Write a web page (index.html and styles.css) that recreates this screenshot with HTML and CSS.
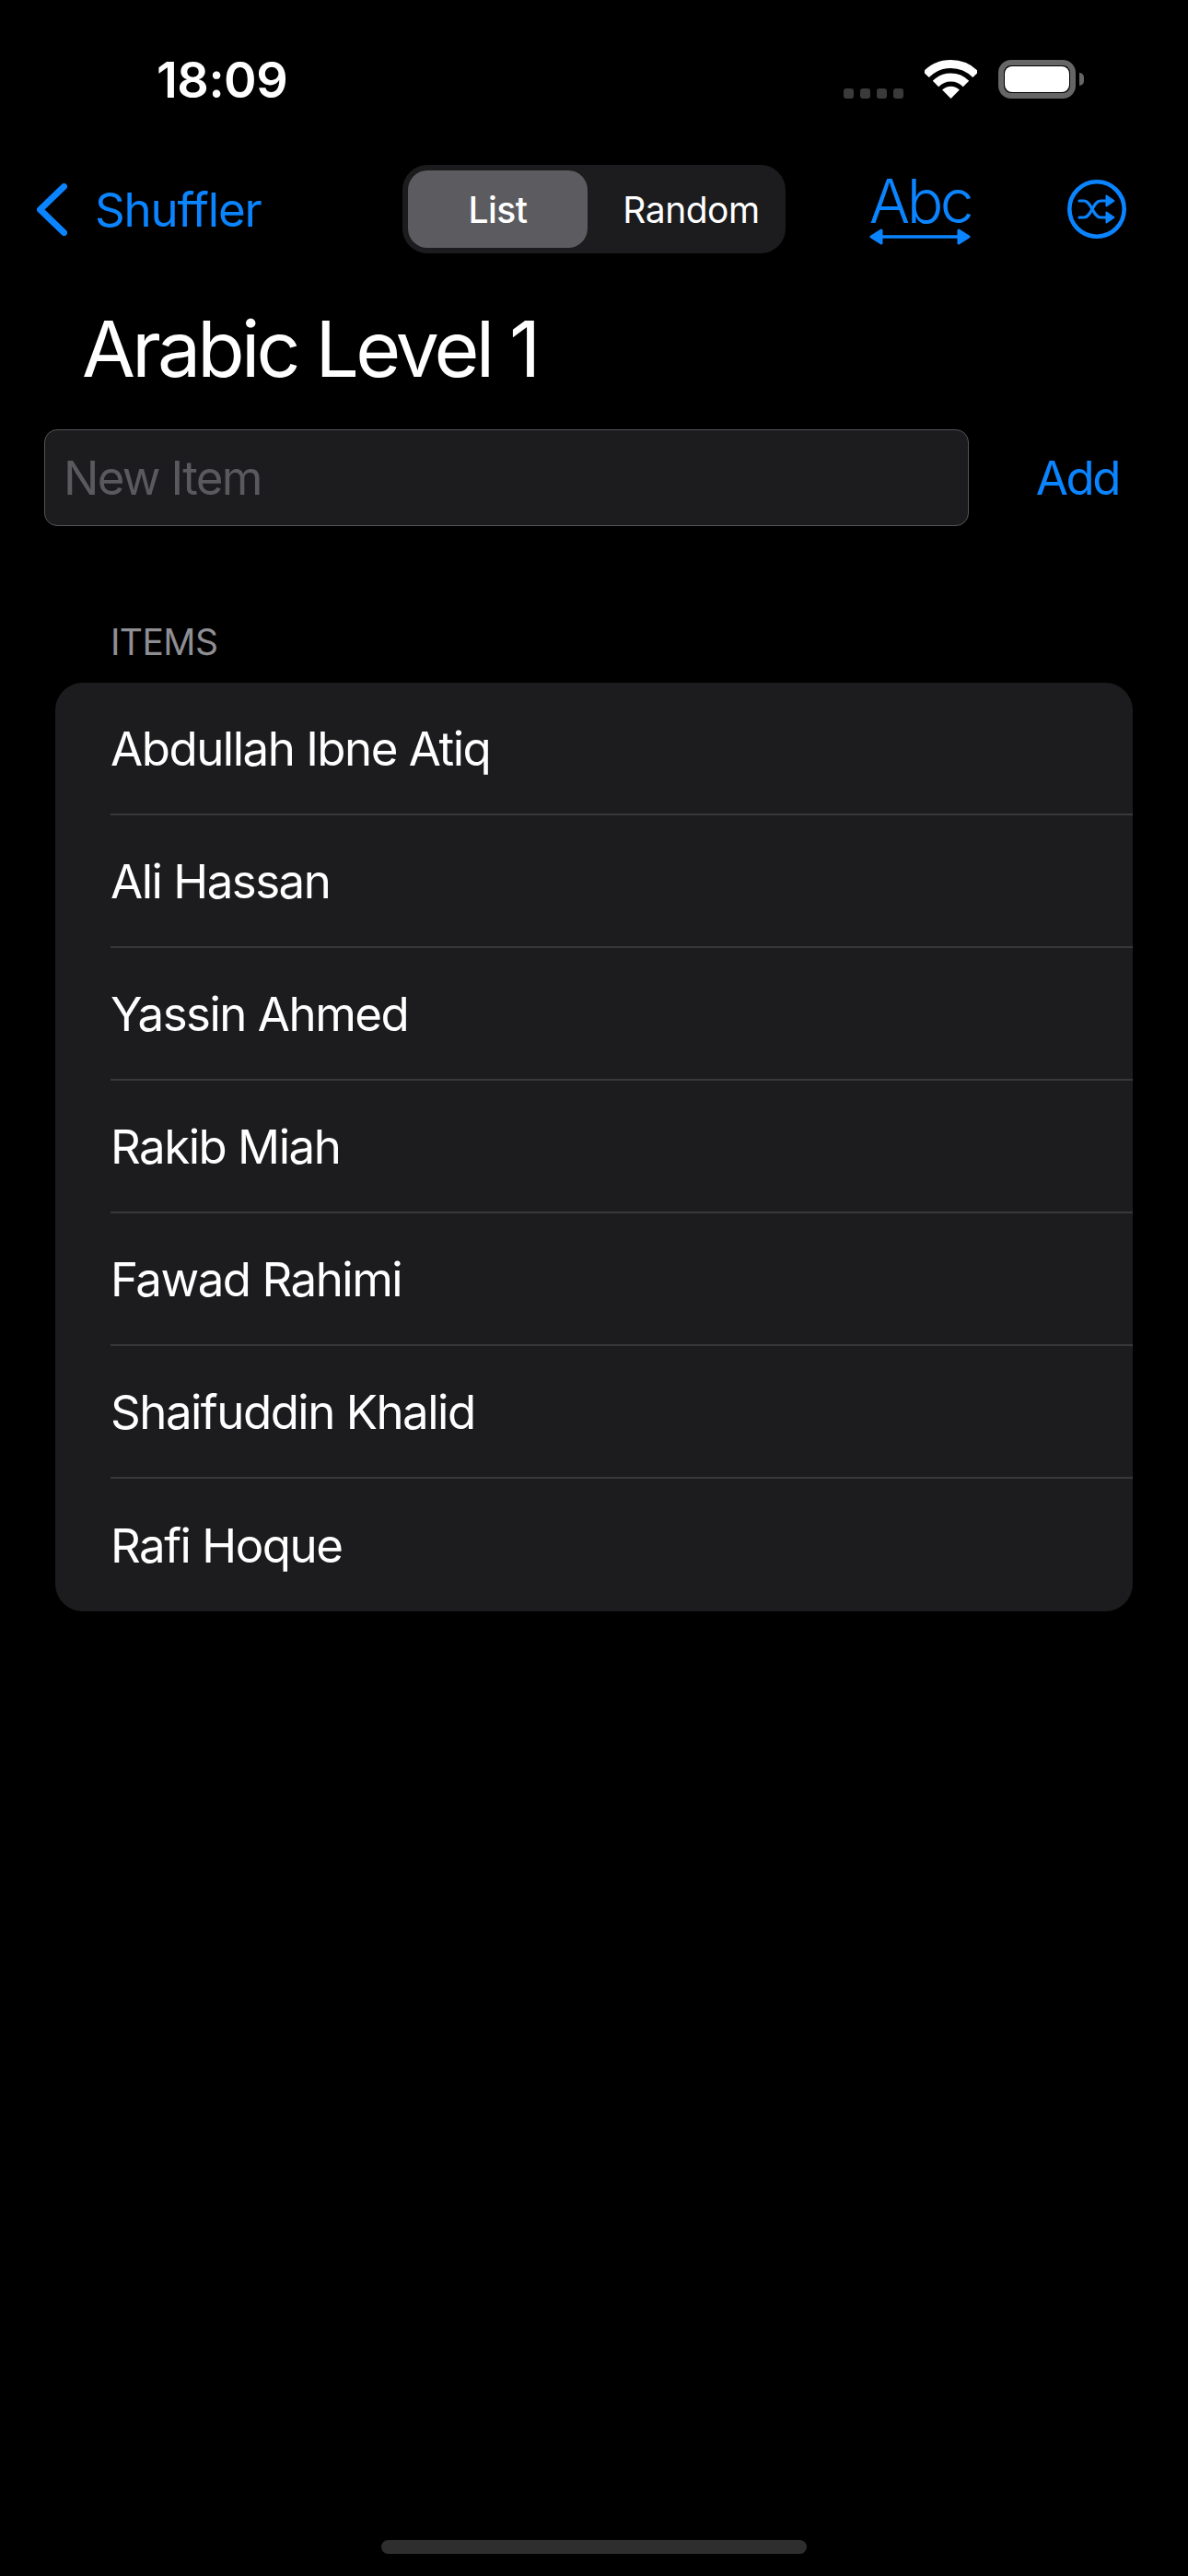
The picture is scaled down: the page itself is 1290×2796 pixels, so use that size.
FILE: index.html
```html
<!DOCTYPE html>
<html lang="en">
<head>
    <meta charset="UTF-8">
    <meta name="viewport" content="width=device-width, initial-scale=1.0">
    <title>Arabic Level 1</title>
    <link rel="stylesheet" href="styles.css">
</head>
<body>
    <div class="screen">
        <header class="status">
            <span class="time">18:09</span>
            <div class="status-icons">
                <div class="signal"><i></i><i></i><i></i><i></i></div>
                <svg class="wifi" width="57" height="42" viewBox="0 0 57 42" fill="none" stroke="#fff" stroke-width="9">
                    <path d="M1.5 16A37.5 37.5 0 0 1 55.5 16"/>
                    <path d="M12 26A23 23 0 0 1 45 26"/>
                    <path d="M28.5 42L19.1 32.6A13.3 13.3 0 0 1 37.9 32.6Z" fill="#fff" stroke="none"/>
                </svg>
                <div class="battery"><div class="battery-level"></div></div>
                <div class="battery-cap"></div>
            </div>
        </header>

        <nav class="nav">
            <a class="back" href="#">
                <svg width="33" height="57" viewBox="0 0 33 57" fill="none" stroke="#0a84ff" stroke-width="7" stroke-linecap="round" stroke-linejoin="round">
                    <path d="M29.5 3.5L3.5 28.5L29.5 53.5"/>
                </svg>
                <span>Shuffler</span>
            </a>
            <div class="segment">
                <button class="seg-item seg-active">List</button>
                <button class="seg-item seg-random">Random</button>
            </div>
            <div class="abc">
                <span class="abc-text">Abc</span>
                <svg width="110" height="18" viewBox="0 0 110 18" fill="#0a84ff" stroke="#0a84ff" stroke-linejoin="round">
                    <path d="M12 9H98" stroke-width="3.5"/>
                    <path d="M13 2L2 9L13 16Z" stroke-width="3"/>
                    <path d="M97 2L108 9L97 16Z" stroke-width="3"/>
                </svg>
            </div>
            <svg class="shuffle" width="64" height="64" viewBox="0 0 64 64" fill="none" stroke="#0a84ff">
                <circle cx="32" cy="32" r="29.7" stroke-width="4.6"/>
                <path d="M13 23H18C26 23 28 41 36 41H43" stroke-width="3.2" stroke-linecap="round"/>
                <path d="M13 41H18C26 41 28 23 36 23H43" stroke-width="3.2" stroke-linecap="round"/>
                <path d="M42.500 17.500L50.500 23L42.500 28.500Z" fill="#0a84ff" stroke-width="2" stroke-linejoin="round"/>
                <path d="M42.500 35.500L50.500 41L42.500 46.500Z" fill="#0a84ff" stroke-width="2" stroke-linejoin="round"/>
            </svg>
        </nav>

        <h1 class="title">Arabic Level 1</h1>

        <div class="add-row">
            <input class="new-item" type="text" placeholder="New Item">
            <a class="add" href="#">Add</a>
        </div>

        <section class="items">
            <h2 class="items-label">ITEMS</h2>
            <ul class="list">
                <li>Abdullah Ibne Atiq</li>
                <li>Ali Hassan</li>
                <li>Yassin Ahmed</li>
                <li>Rakib Miah</li>
                <li>Fawad Rahimi</li>
                <li>Shaifuddin Khalid</li>
                <li>Rafi Hoque</li>
            </ul>
        </section>

        <div class="home-bar"></div>
    </div>
</body>
</html>
```

FILE: styles.css
```css
body {
    margin: 0;
    background: #000;
    color: #fff;
    font-family: Inter, "Liberation Sans", sans-serif;
}
.screen {
    height: 2796px;
    display: flex;
    flex-direction: column;
    overflow: hidden;
}
.status {
    height: 179px;
    box-sizing: border-box;
    padding: 60px 113px 0 170px;
    display: flex;
    justify-content: space-between;
    align-items: flex-start;
}
.time {
    font-size: 54px;
    line-height: 54px;
    font-weight: 600;
    letter-spacing: -0.5px;
}
.status-icons {
    display: flex;
    align-items: flex-end;
    padding-top: 5px;
}
.signal {
    display: flex;
    gap: 7px;
    margin-right: 23px;
}
.signal i {
    width: 11px;
    height: 11px;
    border-radius: 3px;
    background: #3a3a3a;
}
.wifi {
    display: block;
    margin-right: 23px;
}
.battery {
    width: 84px;
    height: 42px;
    box-sizing: border-box;
    border: 6px solid #666;
    border-radius: 14px;
    padding: 1px;
}
.battery-level {
    height: 100%;
    background: #fff;
    border-radius: 8px;
}
.battery-cap {
    width: 5px;
    height: 14px;
    margin: 0 0 14px 4px;
    background: #666;
    border-radius: 0 7px 7px 0;
}

.nav {
    height: 96px;
    padding-left: 40px;
    display: flex;
    align-items: center;
}
.back {
    width: 397px;
    display: flex;
    align-items: center;
    gap: 30px;
    color: #0a84ff;
    text-decoration: none;
    font-size: 51px;
    letter-spacing: -1.2px;
}
.back svg {
    display: block;
}
.segment {
    width: 416px;
    height: 96px;
    box-sizing: border-box;
    padding: 6px;
    display: flex;
    background: #1c1c1e;
    border-radius: 27px;
}
.seg-item {
    flex: 1;
    padding: 0;
    border: 0;
    background: none;
    color: #fff;
    font-family: inherit;
    font-size: 39px;
    font-weight: 400;
    letter-spacing: -0.5px;
}
.seg-random {
    padding-left: 16px;
}
.seg-active {
    flex: none;
    width: 195px;
    background: #5c5c60;
    border-radius: 21px;
    font-weight: 500;
}
.abc {
    width: 110px;
    margin-left: 91px;
    display: flex;
    flex-direction: column;
    align-items: center;
    color: #0a84ff;
}
.abc svg {
    display: block;
}
.abc-text {
    font-size: 66px;
    line-height: 60px;
    font-weight: 300;
    letter-spacing: -3.6px;
}
.shuffle {
    display: block;
    margin-left: 105px;
}

.title {
    margin: 54px 0 0 89px;
    height: 137px;
    font-size: 84px;
    line-height: 100px;
    font-weight: 400;
    letter-spacing: -3.8px;
}
.add-row {
    padding: 0 75px 0 48px;
    display: flex;
    align-items: center;
    justify-content: space-between;
}
.new-item {
    width: 1004px;
    height: 105px;
    box-sizing: border-box;
    padding: 0 20px;
    background: #1c1c1e;
    border: 1px solid #545458;
    border-radius: 14px;
    color: #fff;
    font-family: inherit;
    font-size: 51px;
    letter-spacing: -1.7px;
}
.new-item::placeholder {
    color: #5a5a5e;
    opacity: 1;
}
.add {
    color: #0a84ff;
    text-decoration: none;
    font-size: 51px;
    letter-spacing: -2.5px;
}

.items {
    margin: 0 60px;
    padding-top: 106px;
}
.items-label {
    margin: 0 0 24px 60px;
    font-size: 39px;
    line-height: 40px;
    font-weight: 400;
    color: #8e8e93;
    letter-spacing: -0.6px;
}
.list {
    margin: 0;
    padding: 0;
    list-style: none;
    background: #1c1c1e;
    border-radius: 30px;
}
.list li {
    height: 144px;
    box-sizing: border-box;
    margin-left: 60px;
    display: flex;
    align-items: center;
    border-bottom: 2px solid #38383a;
    font-size: 51px;
    letter-spacing: -1.5px;
}
.list li:last-child {
    border-bottom: 0;
}

.home-bar {
    width: 462px;
    height: 15px;
    margin: auto auto 24px;
    background: #2e2e2e;
    border-radius: 8px;
}
```
